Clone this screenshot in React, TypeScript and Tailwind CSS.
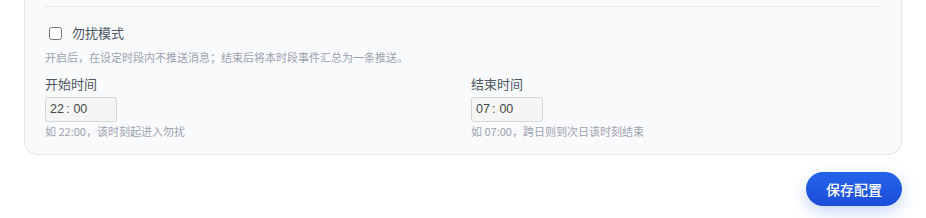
import { useState } from "react";

function TimeField({
  label,
  hh,
  mm,
  hint,
}: {
  label: string;
  hh: string;
  mm: string;
  hint: string;
}) {
  return (
    <div className="min-w-0">
      <div className="text-[13px] leading-[18px] text-[#4b5563]">{label}</div>
      <div className="mt-[4px] flex h-[25px] w-[72px] items-center rounded-[3px] border border-[#d4d6d8] bg-[#f5f6f4] px-[4px] text-[12.5px] text-[#45484d] [font-family:'Liberation_Sans',sans-serif]">
        <span>{hh}</span>
        <span className="ml-[2px]">:</span>
        <span className="ml-[4px]">{mm}</span>
      </div>
      <div className="mt-[1px] text-[11px] leading-[16px] text-[#9ca3af]">{hint}</div>
    </div>
  );
}

export default function App() {
  const [dnd, setDnd] = useState(false);

  return (
    <div className="min-h-[218px] w-[926px] bg-white [font-family:'Noto_Sans_CJK_SC','Noto_Sans',sans-serif]">
      <div className="mx-[24px] rounded-b-[14px] border-x border-b border-[#e3e5e8] bg-[#f9fafb] px-[20px] pb-[15px] pt-[6px]">
        <div className="border-t border-[#e5e7eb]" />

        <label className="mt-[17px] flex cursor-pointer items-center gap-[10px] pl-[4px]">
          <input
            type="checkbox"
            checked={dnd}
            onChange={(e) => setDnd(e.target.checked)}
            className="h-[13px] w-[13px] accent-[#2563eb]"
          />
          <span className="text-[13px] leading-[18px] text-[#4b5563]">勿扰模式</span>
        </label>

        <div className="mt-[7px] text-[11px] leading-[16px] text-[#9ca3af]">
          开启后，在设定时段内不推送消息；结束后将本时段事件汇总为一条推送。
        </div>

        <div className="mt-[10px] grid grid-cols-2 gap-[16px]">
          <TimeField label="开始时间" hh="22" mm="00" hint="如 22:00，该时刻起进入勿扰" />
          <TimeField label="结束时间" hh="07" mm="00" hint="如 07:00，跨日则到次日该时刻结束" />
        </div>
      </div>

      <div className="mr-[24px] mt-[17px] flex justify-end">
        <button
          type="button"
          className="h-[34px] w-[96px] rounded-full bg-gradient-to-b from-[#2563eb] to-[#1d4ed8] text-[14px] font-medium text-white shadow-[0_6px_16px_rgba(37,99,235,0.25)]"
        >
          保存配置
        </button>
      </div>
    </div>
  );
}
